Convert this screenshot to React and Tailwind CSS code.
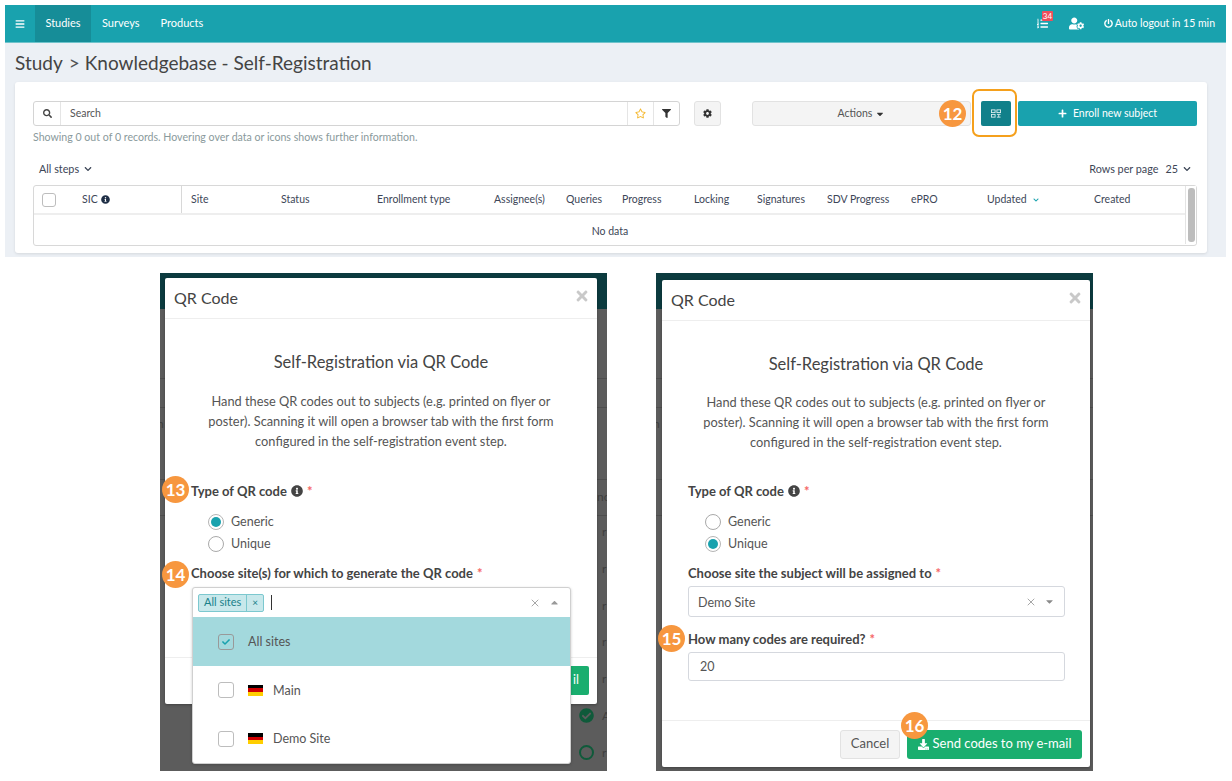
import React from 'react';
import { X } from 'lucide-react';
import {
  FaBars, FaSearch, FaRegStar, FaFilter, FaCog, FaInfoCircle, FaPlus, FaPowerOff, FaTimes,
  FaDownload, FaCheck, FaCheckCircle, FaUserCog, FaListOl, FaChevronDown, FaCaretDown, FaCaretUp,
} from 'react-icons/fa';

const columns = [
  ['Site', 'w-[90px]'],
  ['Status', 'w-[96px]'],
  ['Enrollment type', 'w-[117px]'],
  ['Assignee(s)', 'w-[72px]'],
  ['Queries', 'w-[56px]'],
  ['Progress', 'w-[72px]'],
  ['Locking', 'w-[63px]'],
  ['Signatures', 'w-[70px]'],
  ['SDV Progress', 'w-[84px]'],
  ['ePRO', 'w-[76px]'],
];

const Badge = ({ n, className }) => (
  <span className={`absolute flex h-[27px] w-[27px] items-center justify-center rounded-full bg-[#f7973f] text-[17px] font-bold text-white ${className}`}>
    {n}
  </span>
);

const Flag = () => (
  <span className="flex h-[11px] w-[15px] flex-col">
    <span className="flex-1 bg-black" />
    <span className="flex-1 bg-[#d00000]" />
    <span className="flex-1 bg-[#ffce00]" />
  </span>
);

const Radio = ({ label, checked }) => (
  <div className="flex h-[22px] items-center">
    <span className={`flex h-[16px] w-[16px] items-center justify-center rounded-full border ${checked ? 'border-[#b5b5b5]' : 'border-[#a9a9a9]'} bg-white`}>
      {checked && <span className="h-[10px] w-[10px] rounded-full bg-[#19a2ae]" />}
    </span>
    <span className="ml-[7px] text-[12.5px] text-[#555]">{label}</span>
  </div>
);

const FieldLabel = ({ children }) => (
  <div className="flex items-center text-[13px] font-bold leading-[18px] text-[#444]">
    {children}
    <span className="ml-[4px] text-[#f56565]">*</span>
  </div>
);

const ModalTop = ({ paraGap }) => (
  <>
    <div className="flex h-[41px] items-center justify-between border-b border-[#eeeeee] pl-[9px] pr-[7px]">
      <span className="text-[16px] text-[#444]">QR Code</span>
      <FaTimes className="mb-[4px] text-[16px] text-[#c9c9c9]" />
    </div>
    <h3 className="mt-[32px] text-center text-[16.5px] leading-[22px] text-[#444]">Self-Registration via QR Code</h3>
    <p className={`mx-auto w-[372px] text-center text-[12.8px] leading-[20px] text-[#555] ${paraGap}`}>
      Hand these QR codes out to subjects (e.g. printed on flyer or poster). Scanning it will open a browser tab with the first form configured in the self-registration event step.
    </p>
  </>
);

const TypeLabel = ({ gap }) => (
  <div className={`ml-[26px] ${gap}`}>
    <FieldLabel>
      Type of QR code <FaInfoCircle className="ml-[4px] text-[12px] text-[#444]" />
    </FieldLabel>
  </div>
);

// the study page that lies dimmed behind each modal
const Backdrop = ({ className, children }) => (
  <div className={`relative h-[498px] overflow-hidden bg-[#5c5c5c] ${className}`}>
    <div className="h-[36px] bg-[#0c3b3f]" />
    <div className="h-[70px] border-b border-[#4e4e4e]" />
    <div className="h-[29px] border-b border-[#4e4e4e]" />
    <div className="h-[72px] border-b border-[#4e4e4e]" />
    <div className="h-[36px] border-b border-[#4e4e4e]" />
    {children}
  </div>
);

export default function App() {
  return (
    <div className="h-[781px] w-[1232px] overflow-hidden bg-white font-['Lato',sans-serif]">
      <div className="ml-[5px] mt-[5px] h-[252px] w-[1221px] bg-[#ecf0f5]">
        <nav className="flex h-[38px] items-center border-b border-[#6fc3cb] bg-[#19a2ae] text-[11px] text-white">
          <FaBars className="ml-[10px] mr-[10px] text-[10px]" />
          <span className="flex h-full w-[56px] items-center justify-center bg-[#168d98]">Studies</span>
          <span className="ml-[11px]">Surveys</span>
          <span className="ml-[21px]">Products</span>
          <div className="relative ml-auto mr-[21px]">
            <FaListOl className="text-[11px]" />
            <span className="absolute left-[5px] top-[-7px] rounded-[1px] bg-[#ef4d5b] px-[1px] text-[8px] leading-[10px]">34</span>
          </div>
          <FaUserCog className="mr-[20px] text-[15px]" />
          <FaPowerOff className="mr-[2px] text-[9px]" />
          <span className="mr-[11px] text-[10.5px]">Auto logout in 15 min</span>
        </nav>
        <div className="flex h-[39px] items-center pl-[10px] pt-[2px] text-[19px] text-[#444]">
          Study <span className="ml-[6px] mr-[5px] text-[#555]">&gt;</span> Knowledgebase - Self-Registration
        </div>
        <section className="relative ml-[10px] h-[171px] w-[1192px] rounded-[3px] bg-white pl-[18px] pr-[10px] pt-[19px] shadow-[0_1px_3px_rgba(0,0,0,0.1)]">
          <div className="flex h-[25px] items-stretch">
            <div className="flex w-[647px] rounded-[3px] border border-[#d4d4d4] text-[10.5px] text-[#555]">
              <span className="flex w-[27px] items-center justify-center border-r border-[#e5e5e5]"><FaSearch className="text-[9px] text-[#444]" /></span>
              <span className="flex flex-1 items-center pl-[9px]">Search</span>
              <span className="flex w-[26px] items-center justify-center border-l border-[#e5e5e5]"><FaRegStar className="text-[11px] text-[#f5b82e]" /></span>
              <span className="flex w-[26px] items-center justify-center border-l border-[#e5e5e5]"><FaFilter className="text-[9px] text-[#333]" /></span>
            </div>
            <button className="ml-[14px] flex w-[27px] items-center justify-center rounded-[3px] border border-[#e2e2e2] bg-[#f4f4f4]"><FaCog className="text-[9px] text-[#333]" /></button>
            <button className="ml-[31px] flex w-[219px] items-center justify-center rounded-[3px] border border-[#e2e2e2] bg-[#f4f4f4] text-[10.5px] text-[#555]">
              Actions <FaCaretDown className="ml-[3px] text-[10px] text-[#333]" />
            </button>
            <button className="ml-[10px] flex w-[30px] items-center justify-center rounded-[2px] bg-[#11808a]">
              <svg width="10" height="9" viewBox="0 0 11 9" fill="none" stroke="#fff" strokeWidth="1" opacity="0.85">
                <rect x="0.5" y="0.5" width="4" height="3" />
                <rect x="6.5" y="0.5" width="4" height="3" />
                <rect x="0.5" y="5.5" width="4" height="3" />
                <path d="M6.5 5.5h4M6.5 8.5h4M8.5 5.5v3" />
              </svg>
            </button>
            <button className="ml-[7px] flex w-[179px] items-center justify-center rounded-[2px] bg-[#19a2ae] text-[10.5px] text-white">
              <FaPlus className="mr-[6px] text-[9px]" /> Enroll new subject
            </button>
          </div>
          <p className="mt-[4px] text-[10.6px] leading-[14px] text-[#8a9a9c]">Showing 0 out of 0 records. Hovering over data or icons shows further information.</p>
          <div className="mt-[15px] flex h-[20px] items-center justify-between pl-[6px] pr-[6px] text-[10.8px] text-[#3d4657]">
            <span className="flex items-center">All steps <FaChevronDown className="ml-[5px] text-[8px]" /></span>
            <span className="flex items-center">Rows per page <span className="ml-[7px]">25</span> <FaChevronDown className="ml-[5px] text-[8px]" /></span>
          </div>
          <div className="relative mt-[6px] h-[61px] rounded-[3px] border border-[#d8d8d8] text-[10.5px] text-[#3d4657]">
            <div className="flex h-[29px] items-center border-b-2 border-[#eeeeee]">
              <div className="flex h-full w-[148px] items-center border-r border-[#d8d8d8] pl-[8px]">
                <span className="h-[14px] w-[14px] rounded-[3px] border border-[#bdbdbd]" />
                <span className="ml-[26px]">SIC</span>
                <FaInfoCircle className="ml-[3px] text-[9px] text-[#1f2f46]" />
              </div>
              <div className="flex pl-[9px]">
                {columns.map(([name, width]) => (
                  <span key={name} className={width}>{name}</span>
                ))}
                <span className="flex w-[107px] items-center">Updated <FaChevronDown className="ml-[6px] text-[6px] text-[#19a2ae]" /></span>
                <span>Created</span>
              </div>
            </div>
            <div className="flex h-[30px] items-center justify-center pr-[10px] pt-[3px]">No data</div>
            <div className="absolute bottom-[1px] right-0 top-0 w-[11px] border-l border-[#e4e4e4] bg-white py-[2px] pl-[2px]">
              <div className="h-full w-[7px] rounded-[3px] bg-[#bdbdbd]" />
            </div>
          </div>
          <span className="absolute left-[957px] top-[7px] h-[48px] w-[45px] rounded-[7px] border-2 border-[#f5a01c]" />
          <Badge n="12" className="left-[924px] top-[18px]" />
        </section>
      </div>

      <div className="mt-[16px] flex">
        <Backdrop className="ml-[160px] w-[447px]">
          <span className="absolute left-[-3px] top-[142px] text-[12px] text-[#3f3f3f]">n</span>
          <span className="absolute left-[437px] top-[215px] text-[12px] text-[#3f3f3f]">nc</span>
          <div className="absolute left-[442px] top-[241px] text-[12px] leading-[36.8px] text-[#3f3f3f]">
            <div>r</div>
            <div>r</div>
            <div>r</div>
            <div>r</div>
            <div>r</div>
            <div>A</div>
            <div>r</div>
          </div>
          <div className="absolute left-[5px] top-[5px] h-[426px] w-[432px] rounded-[2px] bg-white shadow-[0_1px_3px_rgba(0,0,0,0.3)]">
            <ModalTop paraGap="mt-[18px]" />
            <TypeLabel gap="mt-[31px]" />
            <div className="ml-[43px] mt-[11px]">
              <Radio label="Generic" checked />
              <Radio label="Unique" />
            </div>
            <div className="ml-[26px] mt-[9px]">
              <FieldLabel>Choose site(s) for which to generate the QR code</FieldLabel>
            </div>
            <div className="absolute bottom-0 left-0 right-0 h-[47px] border-t border-[#eeeeee]" />
            <div className="absolute bottom-[9px] right-[8px] flex h-[29px] w-[60px] items-center justify-end rounded-[2px] bg-[#1aae6f] pr-[10px] text-[12.5px] text-white">il</div>
          </div>
          <FaCheckCircle className="absolute left-[419px] top-[435px] text-[15px] text-[#0f5a3a]" />
          <span className="absolute left-[419px] top-[472px] h-[15px] w-[15px] rounded-full border-2 border-[#0f5a3a]" />
          <Badge n="13" className="left-[2px] top-[203px]" />
          <Badge n="14" className="left-[2px] top-[288px]" />
          <div className="absolute left-[32px] top-[314px] w-[379px] overflow-hidden rounded-[3px] border border-[#d0d0d0] bg-white text-[12.5px] text-[#555] shadow-[0_1px_3px_rgba(0,0,0,0.2)]">
            <div className="flex h-[29px] items-center pl-[5px] pr-[10px]">
              <span className="flex h-[18px] items-center rounded-[2px] border border-[#7cc8cf] bg-[#c8e8eb] text-[11px] text-[#19808a]">
                <span className="border-r border-[#7cc8cf] px-[5px]">All sites</span>
                <span className="px-[5px] text-[10px]">×</span>
              </span>
              <span className="ml-[7px] h-[15px] w-px bg-[#333]" />
              <X size={12} strokeWidth={1.5} className="ml-auto text-[#8a8a8a]" />
              <FaCaretUp className="ml-[8px] text-[11px] text-[#9a9a9a]" />
            </div>
            <div className="flex h-[49px] items-center bg-[#a3d9dd] pl-[25px]">
              <span className="flex h-[16px] w-[16px] items-center justify-center rounded-[3px] border border-[#999]"><FaCheck className="text-[8px] text-[#19a2ae]" /></span>
              <span className="ml-[14px] pt-[2px]">All sites</span>
            </div>
            <div className="flex h-[48px] items-center pl-[25px]">
              <span className="h-[16px] w-[16px] rounded-[3px] border border-[#bdbdbd]" />
              <span className="ml-[14px]"><Flag /></span>
              <span className="ml-[10px] pt-[2px]">Main</span>
            </div>
            <div className="flex h-[49px] items-center pl-[25px]">
              <span className="h-[16px] w-[16px] rounded-[3px] border border-[#bdbdbd]" />
              <span className="ml-[14px]"><Flag /></span>
              <span className="ml-[10px] pt-[2px]">Demo Site</span>
            </div>
          </div>
        </Backdrop>

        <Backdrop className="ml-[49px] w-[437px]">
          <span className="absolute left-[-3px] top-[142px] text-[12px] text-[#3f3f3f]">n</span>
          <div className="absolute left-[6px] top-[7px] h-[487px] w-[428px] rounded-[2px] bg-white shadow-[0_1px_3px_rgba(0,0,0,0.3)]">
            <ModalTop paraGap="mt-[17px]" />
            <TypeLabel gap="mt-[30px]" />
            <div className="ml-[43px] mt-[11px]">
              <Radio label="Generic" />
              <Radio label="Unique" checked />
            </div>
            <div className="ml-[26px] mt-[9px]">
              <FieldLabel>Choose site the subject will be assigned to</FieldLabel>
            </div>
            <div className="ml-[26px] mt-[4px] flex h-[31px] w-[377px] items-center rounded-[3px] border border-[#d5d8de] pl-[9px] pr-[9px] text-[12.5px] text-[#555]">
              <span className="pt-[3px]">Demo Site</span>
              <X size={12} strokeWidth={1.5} className="ml-auto text-[#8a8a8a]" />
              <FaCaretDown className="ml-[7px] text-[11px] text-[#8a8a8a]" />
            </div>
            <div className="ml-[26px] mt-[13px]">
              <FieldLabel>How many codes are required?</FieldLabel>
            </div>
            <div className="ml-[26px] mt-[4px] flex h-[29px] w-[377px] items-center rounded-[3px] border border-[#d5d8de] pl-[11px] text-[12.5px] text-[#555]">
              <span className="pt-[2px]">20</span>
            </div>
            <div className="absolute bottom-0 left-0 right-0 flex h-[47px] items-center justify-end border-t border-[#eeeeee] pr-[8px] text-[13px]">
              <button className="h-[29px] w-[60px] rounded-[3px] border border-[#e2e2e2] bg-[#f4f4f4] text-[#555]">Cancel</button>
              <button className="ml-[7px] flex h-[29px] w-[175px] items-center justify-center rounded-[3px] bg-[#1aae6f] text-white">
                <FaDownload className="mr-[4px] text-[11px]" /> Send codes to my e-mail
              </button>
            </div>
          </div>
          <Badge n="15" className="left-[2px] top-[352px]" />
          <Badge n="16" className="left-[245px] top-[439px]" />
        </Backdrop>
      </div>
    </div>
  );
}
